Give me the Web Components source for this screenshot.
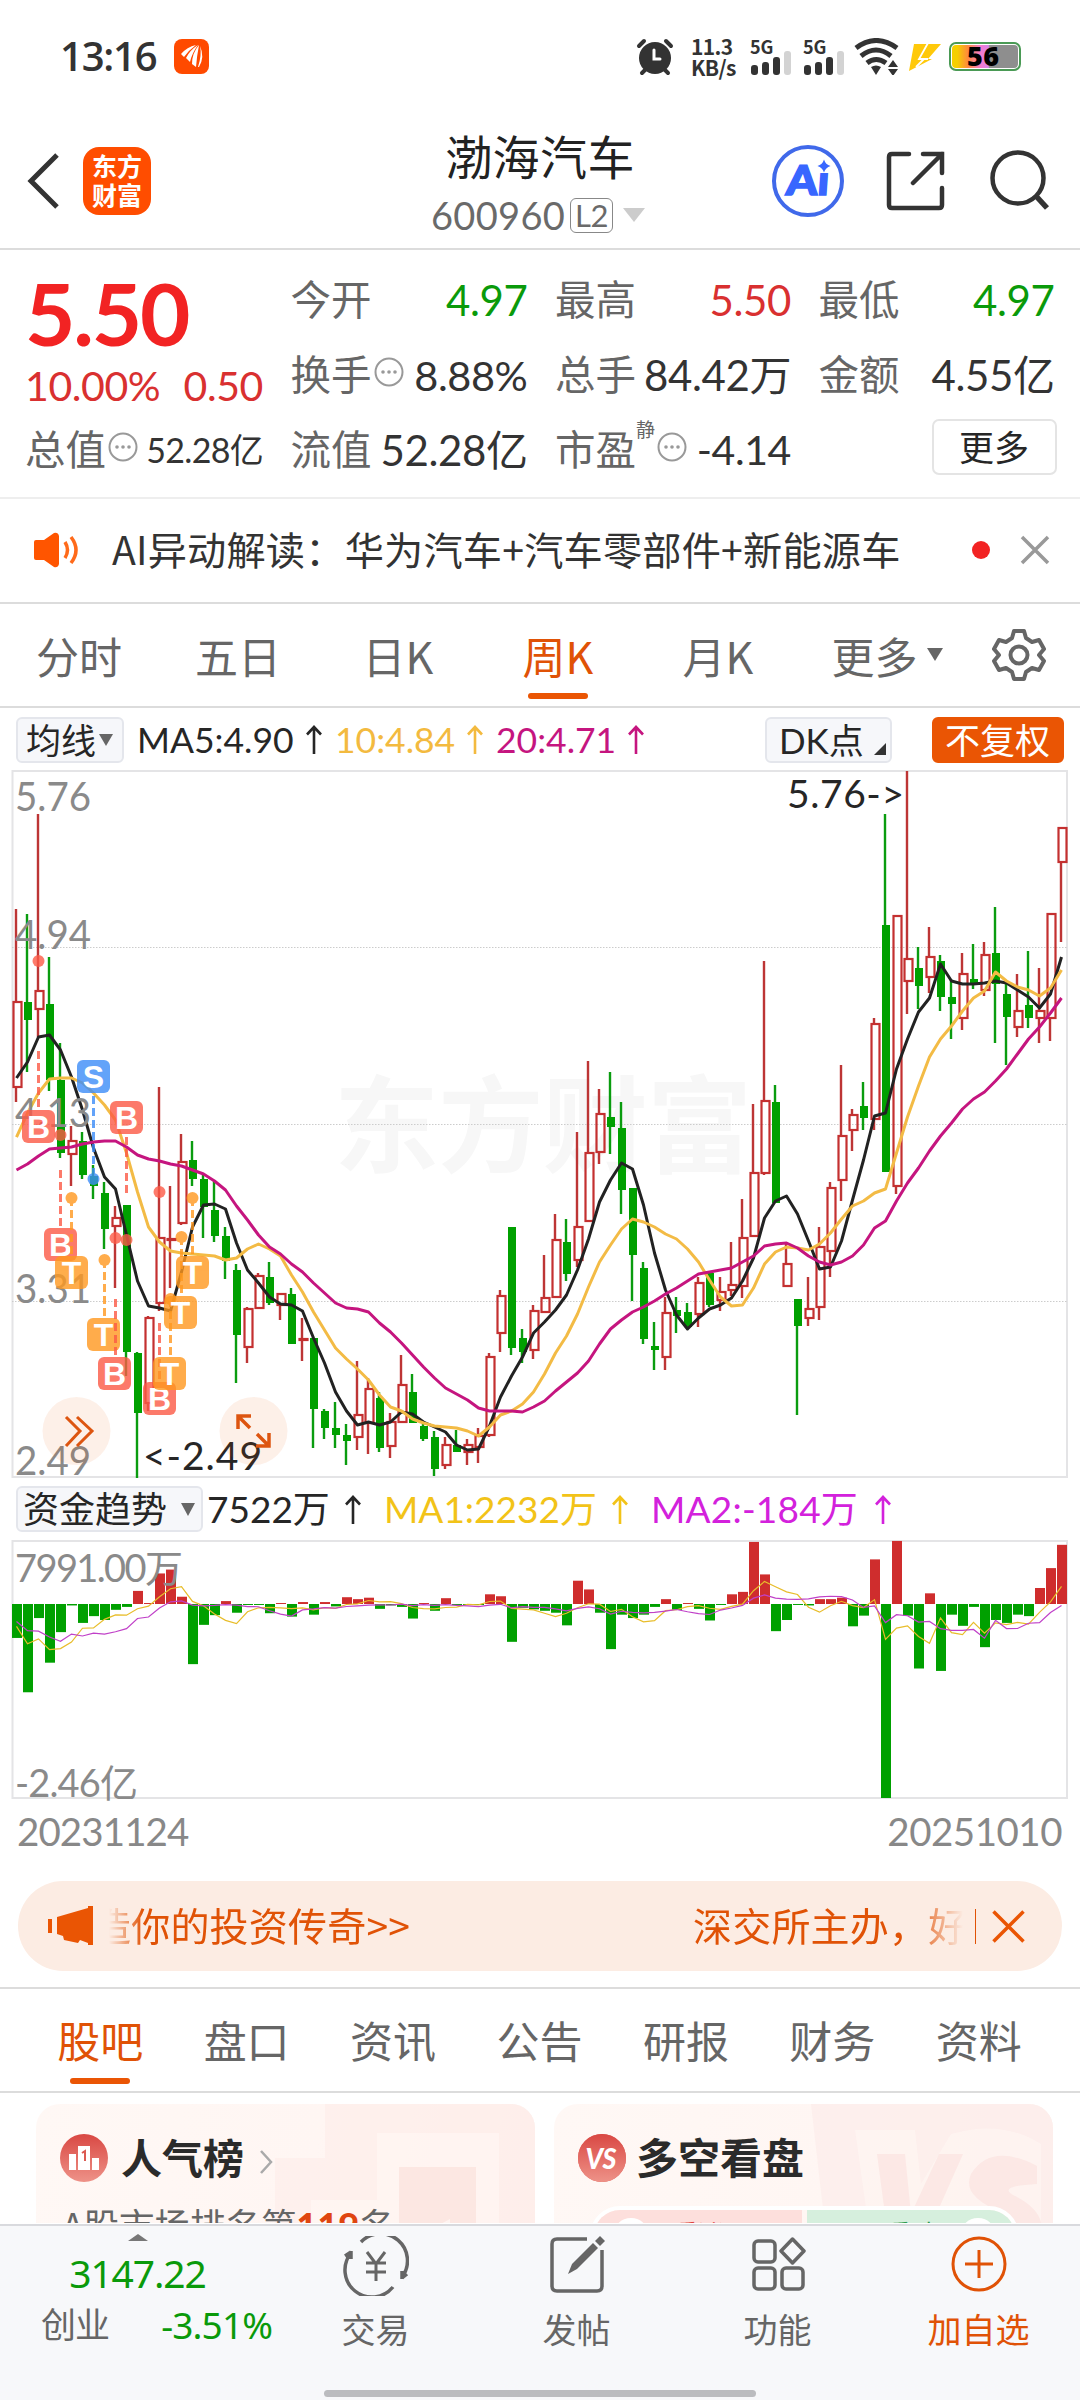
<!DOCTYPE html>
<html lang="zh-CN">
<head>
<meta charset="UTF-8">
<title>渤海汽车 600960</title>
<style>
  body {
    margin: 0;
    width: 1080px;
    height: 2400px;
    overflow: hidden;
    background: #fff;
    color: #262626;
    font-family: Lato, "Noto Sans CJK SC", sans-serif;
  }
</style>
</head>
<body>
<stock-app></stock-app>

<script>
const FONT_NUM = `font-family: Lato, "Noto Sans CJK SC", sans-serif;`;

function define(name, html, setup) {
  const template = document.createElement("template");
  template.innerHTML = html;
  customElements.define(name, class extends HTMLElement {
    constructor() {
      super();
      this.attachShadow({ mode: "open" });
      this.shadowRoot.appendChild(template.content.cloneNode(true));
    }
    connectedCallback() {
      if (setup) setup(this, this.shadowRoot);
    }
  });
}

/* ---------- status bar ---------- */

define("signal-bars", `
  <style>
    :host { display: flex; flex-direction: column; width: 42px; font: 700 18px/18px "Noto Sans CJK SC", sans-serif; letter-spacing: -0.2px; color: #333; }
    svg { display: block; margin: -5px 0 0 1px; }
  </style>
  <span>5G</span>
  <svg width="42" height="26" viewBox="0 0 42 26" fill="#333">
    <rect x="0" y="15" width="7" height="10" rx="3"/>
    <rect x="11" y="12" width="7" height="13" rx="3"/>
    <rect x="22" y="7" width="7" height="18" rx="3"/>
    <rect x="33" y="1" width="7" height="24" rx="3" fill="#d3d3d3"/>
  </svg>
`);

define("status-bar", `
  <style>
    :host { display: flex; align-items: center; height: 113px; box-sizing: border-box; padding-left: 60px; color: #333; }
    .time { font: 600 40px/44px "Open Sans", sans-serif; width: 114px; letter-spacing: -1.2px; margin-top: -2px; }
    .app { display: block; }
    .right { display: flex; align-items: center; margin-left: 427px; }
    .speed { font: 700 21px/21px "Noto Sans CJK SC", sans-serif; margin-left: 17px; width: 59px; letter-spacing: -0.6px; }
    signal-bars + signal-bars { margin-left: 11px; }
    svg { display: block; }
    .battery {
      width: 66px; height: 23px; margin-left: 7px; border: 2px solid #4a9a55; border-radius: 7px; position: relative;
      padding: 1px; display: flex; font: 700 27px/25px "Open Sans", sans-serif; color: #000; letter-spacing: 0.4px;
    }
    .battery i { display: block; flex: 1; border-radius: 4px; background: linear-gradient(90deg, #f5cf00 0 8%, #ff8a3c 24%, #f57bd0 44%, #d884e8 55%, #8e8e8e 57%); }
    .battery b { position: absolute; left: 16px; top: -1px; }
  </style>
  <span class="time">13:16</span>
  <svg class="app" width="35" height="35" viewBox="0 0 35 35">
    <rect width="35" height="35" rx="8" fill="#ff4a00"/>
    <g fill="#fff"><path d="M7 15Q13 8 22 6Q15 11 10 18Z"/><path d="M12 19Q16 11 24 6Q18 14 16 23Z"/><path d="M18 25Q18 14 25 6Q23 16 22 28Z"/><path d="M24 28Q28 16 26 7Q31 18 25 28Z"/></g>
  </svg>
  <div class="right">
    <svg width="38" height="38" viewBox="0 0 38 38" fill="none" stroke="#333" stroke-width="4" stroke-linecap="round">
      <circle cx="19" cy="20" r="16" fill="#333" stroke="none"/>
      <path d="M3 8L8 3M35 8L30 3M6 35L9 32M32 35L29 32"/>
      <path d="M18 12V21H24" stroke="#fff" stroke-width="3"/>
    </svg>
    <div class="speed">11.3<br>KB/s</div>
    <signal-bars></signal-bars>
    <signal-bars></signal-bars>
    <svg width="46" height="37" viewBox="0 0 46 37" style="margin-left:9px" fill="none" stroke="#333" stroke-width="5">
      <path d="M2 10Q22 -5 43 10M7 18Q22 6 37 18M13 25Q22 18 32 25"/>
      <path d="M17 29Q22 26 27 29L22 37Z" fill="#333" stroke="none"/>
      <path d="M34 29L39 22L44 29ZM34 31L39 38L44 31Z" fill="#333" stroke="none"/>
    </svg>
    <svg width="34" height="30" viewBox="0 0 34 30" style="margin-left:8px">
      <path d="M6 2H33L20 17H24L1 29Z" fill="#ffc90a"/><path d="M20 1L11 17H20M8 25L16 17" fill="none" stroke="#fff" stroke-width="1.800"/>
    </svg>
    <div class="battery"><i></i><b>56</b></div>
  </div>
`);

/* ---------- title bar ---------- */

define("title-bar", `
  <style>
    :host { display: grid; grid-template-columns: 330px 420px 330px; height: 135px; border-bottom: 2px solid #dcdcdc; }
    .left { display: flex; align-items: flex-start; padding: 34px 0 0 26px; }
    .logo {
      margin-left: 24px; width: 68px; height: 68px; box-sizing: border-box; padding-top: 4px; border-radius: 16px; background: #ff4d00; color: #fff;
      font: 700 25px/29px "Noto Sans CJK SC", sans-serif; text-align: center;
    }
    .mid { display: flex; flex-direction: column; align-items: center; }
    .name { font: 400 47px/56px "Noto Sans CJK SC", sans-serif; margin-top: 14px; height: 56px; color: #222; letter-spacing: 0.4px; }
    .code { display: flex; align-items: center; font-size: 38px; line-height: 40px; color: #6a6a6a; margin: 12px 4px 0 0; letter-spacing: 0.3px; }
    .code b { font-weight: 400; font-size: 31px; line-height: 33px; letter-spacing: -0.5px; border: 1.5px solid #888; border-radius: 6px; padding: 0 4px; margin-left: 5px; }
    .code i { border: 11px solid transparent; border-top: 14px solid #ccc; border-bottom: 0; margin-left: 10px; }
    .right { display: flex; align-items: flex-start; padding: 31px 0 0 21px; }
    svg { display: block; }
  </style>
  <div class="left">
    <svg width="33" height="66" viewBox="0 0 33 66" fill="none" stroke="#333" stroke-width="5"><path d="M31 8L5 34L31 60"/></svg>
    <div class="logo">东方<br>财富</div>
  </div>
  <div class="mid">
    <div class="name">渤海汽车</div>
    <div class="code">600960<b>L2</b><i></i></div>
  </div>
  <div class="right">
    <svg width="74" height="74" viewBox="0 0 74 74">
      <circle cx="37" cy="37" r="34" fill="#fff" stroke="#4069ea" stroke-width="4"/>
      <text x="17" y="51" style="font:900 41px Lato, sans-serif" fill="#3866ff" stroke="#3866ff" stroke-width="1.500" transform="skewX(-4) translate(1 0)" textLength="43" lengthAdjust="spacingAndGlyphs">Aı</text>
      <path d="M53 15.500Q54.500 20.500 59.500 22Q54.500 23.500 53 28.500Q51.500 23.500 46.500 22Q51.500 20.500 53 15.500Z" fill="#3866ff"/>
    </svg>
    <svg width="62" height="62" viewBox="0 0 62 62" style="margin:7px 0 0 40px" fill="none" stroke="#333" stroke-width="4.500">
      <path d="M24 3H7Q4 3 4 6V54Q4 57 7 57H54Q57 57 57 54V37M38 3H57V22M57 3L28 32" stroke-linecap="round"/>
    </svg>
    <svg width="64" height="64" viewBox="0 0 64 64" style="margin:6px 0 0 41px" fill="none" stroke="#333" stroke-width="4.500">
      <circle cx="30" cy="28" r="25.500"/><path d="M48 46L59 58" stroke-width="5.500"/>
    </svg>
  </div>
`);

/* ---------- quote panel ---------- */

define("hint-dot", `
  <style>:host { display: block; } svg { display: block; }</style>
  <svg width="30" height="30" viewBox="0 0 30 30"><circle cx="15" cy="15" r="13.500" fill="none" stroke="#999" stroke-width="2"/>
  <g fill="#999"><circle cx="9" cy="15" r="1.800"/><circle cx="15" cy="15" r="1.800"/><circle cx="21" cy="15" r="1.800"/></g></svg>
`);

define("quote-cell", `
  <style>
    :host { display: flex; align-items: center; height: 75px; line-height: 60px; color: #666; font-size: 40.500px; white-space: nowrap; }
    .value { margin-left: auto; color: var(--value-color, #333); font-size: var(--value-size, 42px); letter-spacing: var(--value-gap, -0.4px); }
    ::slotted(hint-dot) { margin: -6px 0 0 2px; }
    ::slotted(sup) { font-size: 19px; line-height: 20px; margin-top: -40px; }
  </style>
  <slot></slot><span class="value"><slot name="value"></slot></span>
`);

define("quote-panel", `
  <style>
    :host { display: grid; grid-template-columns: 238px 237px 236px 236px; column-gap: 27.500px; padding: 12px 26px 0 25px; height: 235px; border-bottom: 2px solid #eee; }
    .col { display: flex; flex-direction: column; }
    .price { height: 102px; font: 700 87px/102px Lato, sans-serif; color: #f22323; letter-spacing: -2.200px; }
    .chg { display: flex; justify-content: space-between; font-size: 41px; line-height: 44px; height: 48px; color: #d93030; letter-spacing: -0.400px; }
    .up { --value-color: #d93030; }
    .down { --value-color: #0a9a0a; }
    .more { display: flex; justify-content: flex-end; align-items: center; height: 75px; }
    .more span { width: 125px; height: 56px; box-sizing: border-box; border: 2px solid #e4e4e4; border-radius: 7px; text-align: center; font: 35px/49px "Noto Sans CJK SC", sans-serif; margin: -5px -2px 0 0; }
    .col > quote-cell { flex: none; }
  </style>
  <div class="col">
    <div class="price">5.50</div>
    <div class="chg"><span>10.00%</span><span>0.50</span></div>
    <quote-cell style="--value-size:34px;--value-gap:-0.7px">总值<hint-dot></hint-dot><span slot="value">52.28亿</span></quote-cell>
  </div>
  <div class="col">
    <quote-cell class="down">今开<span slot="value">4.97</span></quote-cell>
    <quote-cell style="--value-size:41.500px">换手<hint-dot></hint-dot><span slot="value">8.88%</span></quote-cell>
    <quote-cell>流值<span slot="value">52.28亿</span></quote-cell>
  </div>
  <div class="col">
    <quote-cell class="up">最高<span slot="value">5.50</span></quote-cell>
    <quote-cell>总手<span slot="value">84.42万</span></quote-cell>
    <quote-cell style="--value-size:41px">市盈<sup>静</sup><hint-dot></hint-dot><span slot="value">-4.14</span></quote-cell>
  </div>
  <div class="col">
    <quote-cell class="down">最低<span slot="value">4.97</span></quote-cell>
    <quote-cell>金额<span slot="value">4.55亿</span></quote-cell>
    <div class="more"><span>更多</span></div>
  </div>
`);

/* ---------- news strip ---------- */

define("news-strip", `
  <style>
    :host { display: flex; align-items: center; height: 103px; border-bottom: 2px solid #dcdcdc; padding: 0 30px 2px 34px; box-sizing: content-box; height: 101px; color: #333; }
    p { margin: -4px 0 0 32px; flex: 1; font: 39.200px/60px "Noto Sans CJK SC", sans-serif; letter-spacing: 0.2px; white-space: nowrap; }
    i { width: 18px; height: 18px; border-radius: 50%; background: #f22323; margin-right: 30px; }
    svg { display: block; }
  </style>
  <svg width="46" height="36" viewBox="0 0 46 36"><path d="M2 8H10L20 1Q24 0 25 4V32Q24 36 20 35L10 28H2Q0 28 0 26V10Q0 8 2 8Z" fill="#ff5500"/>
    <path d="M31 10Q36 18 31 26M37 5Q47 18 37 31" fill="none" stroke="#ff6a1a" stroke-width="3.500"/></svg>
  <p>AI异动解读：华为汽车+汽车零部件+新能源车</p>
  <i></i>
  <svg width="30" height="30" viewBox="0 0 30 30" stroke="#999" stroke-width="3.500"><path d="M2 2L28 28M28 2L2 28"/></svg>
`);

/* ---------- tabs ---------- */

define("tab-item", `
  <style>
    :host { display: flex; justify-content: center; align-items: center; position: relative; color: #666; font: 43px/60px "Noto Sans CJK SC", sans-serif; white-space: nowrap; }
    :host([active]) { color: #e05206; }
    :host([active])::after { content: ""; position: absolute; left: calc(50% - 30px); bottom: 7px; width: 60px; height: 6px; border-radius: 3px; background: #ea5504; }
  </style>
  <slot></slot>
`);

define("period-tabs", `
  <style>
    :host { display: flex; height: 102px; border-bottom: 2px solid #dcdcdc; }
    tab-item { width: 160px; }
    tab-item:first-of-type { width: 158px; }
    .more { width: 178px; }
    i { border: 8px solid transparent; border-top: 13px solid #666; border-bottom: 0; margin: -2px 0 0 9px; }
    .gear { display: flex; align-items: center; padding-left: 16px; }
  </style>
  <tab-item>分时</tab-item>
  <tab-item>五日</tab-item>
  <tab-item>日K</tab-item>
  <tab-item active>周K</tab-item>
  <tab-item>月K</tab-item>
  <tab-item class="more">更多<i></i></tab-item>
  <div class="gear">
    <svg width="54" height="54" viewBox="0 0 54 54" fill="none" stroke="#666" stroke-width="4" stroke-linejoin="round">
      <path d="M22 3H32L34 10L40 14L47 12L52 21L47 27L52 33L47 42L40 40L34 44L32 51H22L20 44L14 40L7 42L2 33L7 27L2 21L7 12L14 14L20 10Z"/>
      <circle cx="27" cy="27" r="8.500"/>
    </svg>
  </div>
`);

define("section-tabs", `
  <style>
    :host { display: flex; height: 102px; border-top: 2px solid #dcdcdc; border-bottom: 2px solid #dcdcdc; padding: 0 28px 0 27px; }
    tab-item { flex: 1; line-height: 56px; height: 102px; box-sizing: border-box; padding-bottom: 2px; }
  </style>
  <tab-item active>股吧</tab-item>
  <tab-item>盘口</tab-item>
  <tab-item>资讯</tab-item>
  <tab-item>公告</tab-item>
  <tab-item>研报</tab-item>
  <tab-item>财务</tab-item>
  <tab-item>资料</tab-item>
`);

/* ---------- chart legends ---------- */

define("up-arrow", `
  <style>:host { display: block; } svg { display: block; }</style>
  <svg width="16" height="29" viewBox="0 0 16 29" fill="none" stroke="currentColor" stroke-width="2.600"><path d="M8 29V2M1 9.500L8 2L15 9.500"/></svg>
`);

define("chip-button", `
  <style>
    :host { display: flex; align-items: center; box-sizing: border-box; height: 46px; border: 2px solid #e4e6ec; border-radius: 6px; background: #f6f7fa; color: #262626; font-size: 35px; line-height: 42px; white-space: nowrap; position: relative; }
    :host([solid]) { background: #ea5504; border-color: #ea5504; color: #fff; }
  </style>
  <slot></slot>
`);

define("ma-legend", `
  <style>
    :host { display: flex; align-items: center; height: 61px; padding: 0 0 1px 16px; font-size: 35.500px; line-height: 44px; white-space: nowrap; }
    .g { display: flex; align-items: center; }
    up-arrow { margin: 0 0 0 12px; }
    .tri { border: 7px solid transparent; border-top: 12px solid #666; border-bottom: 0; margin-left: 3px; }
    .corner { border: 6px solid transparent; border-right-color: #333; border-bottom-color: #333; margin: 19px 0 0 10px; }
  </style>
  <chip-button style="width:108px;padding-left:8px;">均线<i class="tri"></i></chip-button>
  <div class="g" style="width:198px;margin-left:13px"><span>MA5:4.90</span><up-arrow></up-arrow></div>
  <div class="g" style="width:161px;color:#f3ba3f"><span>10:4.84</span><up-arrow></up-arrow></div>
  <div class="g" style="width:269px;color:#c5157f"><span>20:4.71</span><up-arrow></up-arrow></div>
  <chip-button style="width:127px;padding-left:12px">DK点<i class="corner"></i></chip-button>
  <chip-button solid style="width:132px;margin-left:40px;padding-left:11px">不复权</chip-button>
`);

define("fund-legend", `
  <style>
    :host { display: flex; align-items: center; height: 64px; padding-left: 16px; font-size: 37px; line-height: 44px; white-space: nowrap; }
    .g { display: flex; align-items: center; }
    up-arrow { margin-left: 15px; }
    .tri { border: 7px solid transparent; border-top: 13px solid #666; border-bottom: 0; margin-left: 14px; }
  </style>
  <chip-button style="width:187px;padding-left:5px;font-size:36px">资金趋势<i class="tri"></i></chip-button>
  <div class="g" style="width:177px;margin-left:4px"><span>7522万</span><up-arrow></up-arrow></div>
  <div class="g" style="width:267px;color:#f2c318"><span>MA1:2232万</span><up-arrow></up-arrow></div>
  <div class="g" style="color:#d321dc;letter-spacing:0.2px"><span>MA2:-184万</span><up-arrow style="margin-left:17px"></up-arrow></div>
`);

/* ---------- weekly candles ---------- */

// one row per week: direction, high, body top, body bottom, low
const CANDLES = `
r 909 1002 1087 1102|g 914 1002 1020 1072|r 814 991 1009 1037|g 957 1004 1080 1091|g 1043 1080 1153 1158|r 1126 1141 1154 1186
g 1132 1141 1175 1179|g 1165 1176 1186 1199|g 1182 1193 1229 1249|r 1206 1218 1226 1288|g 1205 1205 1352 1376|g 1352 1353 1413 1478
r 1316 1318 1403 1411|r 1087 1238 1303 1311|r 1186 1239 1240 1288|r 1134 1162 1223 1225|g 1141 1160 1179 1186|g 1175 1179 1207 1238
g 1180 1210 1236 1242|g 1227 1236 1261 1279|g 1264 1270 1335 1383|r 1307 1309 1347 1363|r 1273 1276 1308 1309|g 1262 1277 1303 1305
r 1293 1294 1305 1320|g 1288 1294 1344 1344|r 1318 1339 1340 1361|g 1337 1338 1409 1448|g 1409 1411 1428 1439|g 1402 1428 1435 1448
g 1424 1435 1441 1465|r 1361 1415 1437 1450|r 1378 1389 1423 1454|g 1392 1398 1448 1452|r 1413 1422 1446 1458|r 1355 1385 1422 1422
g 1374 1392 1423 1423|g 1422 1426 1439 1441|g 1431 1437 1469 1476|r 1437 1445 1465 1469|g 1430 1445 1452 1452|r 1439 1445 1452 1465
r 1428 1436 1447 1463|r 1353 1357 1435 1437|r 1290 1296 1333 1352|g 1227 1227 1348 1355|g 1329 1338 1352 1363|r 1305 1311 1350 1359
r 1255 1298 1312 1313|r 1214 1240 1297 1298|g 1219 1242 1274 1281|r 1132 1227 1260 1267|r 1061 1153 1221 1221|r 1089 1114 1152 1164
g 1072 1117 1127 1154|g 1102 1128 1190 1214|g 1188 1188 1255 1301|g 1262 1268 1339 1344|g 1322 1346 1350 1370|r 1297 1313 1357 1370
g 1297 1310 1316 1333|g 1303 1312 1327 1328|r 1277 1283 1314 1327|g 1273 1273 1305 1307|r 1277 1292 1300 1311|r 1242 1285 1290 1296
r 1199 1238 1286 1298|r 1104 1173 1236 1236|r 961 1101 1173 1175|g 1085 1102 1203 1203|r 1244 1264 1286 1286|g 1299 1299 1326 1415
r 1277 1309 1318 1326|r 1227 1247 1307 1320|r 1182 1188 1251 1277|r 1065 1136 1180 1201|r 1109 1115 1130 1151|g 1082 1106 1118 1130
r 1018 1024 1119 1130|g 814 925 1172 1172|r 915 916 1186 1194|r 771 959 981 1014|g 947 968 986 1009|r 927 957 977 993
g 955 961 997 1011|g 979 997 1004 1039|r 953 974 1018 1030|g 944 979 983 989|r 942 955 990 996|g 907 953 984 1043
g 983 994 1017 1065|r 974 1011 1027 1037|g 951 1005 1018 1028|r 968 1011 1018 1043|r 913 914 1018 1041|r 827 828 862 942
`.trim().split(/[|\n]/).map((row) => {
  const [dir, ...v] = row.split(" ");
  return [dir, ...v.map(Number)];
});

const MA_LINES = [
  ["#222", "1078 1062 1037 1035 1050 1077 1110 1148 1177 1189 1235 1281 1306 1308 1311 1272 1227 1205 1204 1209 1243 1270 1283 1297 1304 1305 1311 1338 1363 1392 1411 1425 1422 1425 1422 1412 1414 1422 1427 1432 1445 1450 1449 1426 1397 1376 1357 1333 1322 1310 1295 1270 1239 1202 1180 1163 1169 1205 1253 1290 1315 1329 1318 1309 1305 1298 1281 1258 1218 1201 1196 1214 1241 1269 1267 1241 1200 1160 1116 1113 1069 1039 1012 998 964 981 984 984 983 981 983 990 997 1008 994 957"],
  ["#f3bb45", "1137 1113 1093 1079 1078 1078 1083 1093 1105 1120 1153 1192 1227 1242 1251 1253 1254 1255 1256 1260 1258 1249 1244 1249 1256 1275 1292 1312 1330 1348 1359 1369 1380 1395 1407 1411 1419 1423 1426 1427 1428 1431 1436 1427 1415 1411 1404 1392 1374 1353 1336 1314 1287 1262 1245 1229 1219 1222 1227 1234 1239 1249 1262 1280 1297 1306 1305 1288 1264 1252 1247 1248 1250 1244 1233 1219 1206 1201 1193 1189 1153 1117 1086 1057 1039 1026 1011 998 991 972 981 987 990 996 988 970"],
  ["#c5157f", "1170 1164 1156 1149 1148 1147 1144 1142 1141 1141 1147 1155 1159 1161 1164 1166 1170 1174 1181 1190 1206 1220 1235 1247 1254 1264 1272 1283 1293 1303 1308 1309 1312 1323 1332 1343 1355 1367 1378 1388 1394 1400 1408 1411 1411 1411 1412 1407 1401 1391 1382 1373 1361 1344 1329 1320 1312 1307 1301 1294 1288 1281 1274 1272 1270 1268 1262 1256 1246 1244 1243 1248 1256 1262 1265 1262 1256 1245 1228 1221 1201 1183 1168 1151 1136 1123 1109 1099 1092 1081 1069 1054 1039 1027 1013 998"],
];

// letter, badge left, badge top, stem x, stem from, stem to, dot y
const MARKS = [
  ["B", 22, 1110, 38, 1051, 1110, 961],
  ["S", 77, 1060, 93, 1096, 1179, 1179],
  ["B", 110, 1101, 126, 1137, 1193, 1240],
  ["B", 44, 1228, 60, 1170, 1228, 1135],
  ["T", 55, 1256, 71, 1198, 1256, 1198],
  ["T", 87, 1318, 104, 1260, 1318, 1260],
  ["B", 98, 1357, 115, 1299, 1357, 1238],
  ["B", 143, 1382, 159, 1323, 1382, 1192],
  ["T", 153, 1357, 170, 1299, 1357, 1299],
  ["T", 164, 1296, 181, 1237, 1296, 1237],
  ["T", 176, 1256, 192, 1198, 1256, 1198],
];
const MARK_COLORS = { B: "#fc5a46", S: "#3d8df8", T: "#ff981f" };

define("kline-chart", `
  <style>
    :host { display: block; height: 706px; }
    svg { display: block; overflow: visible; }
    text { ${FONT_NUM} }
  </style>
  <svg width="1080" height="706" viewBox="0 771 1080 706"></svg>
`, (host, root) => {
  const wickX = (i) => 16 + 11 * i;
  let out = `<text x="334" y="1164" font-weight="700" font-size="105" fill="#f7f7f7" textLength="418">东方财富</text>`;
  out += `<rect x="12.500" y="771" width="1054.500" height="706" fill="none" stroke="#e4e4e6" stroke-width="2"/>`;
  for (const y of [947.5, 1124.5, 1301.5]) {
    out += `<path d="M12 ${y}H1067" stroke="#ccc" stroke-dasharray="1.500 1.500"/>`;
  }
  CANDLES.forEach(([dir, high, top, bottom, low], i) => {
    const x = wickX(i);
    if (dir === "g") {
      out += `<path d="M${x} ${high}V${low}" stroke="#0a9c0f" stroke-width="2.400"/>`;
      out += `<rect x="${x - 3}" y="${top}" width="8" height="${bottom - top}" fill="#00a000"/>`;
    } else {
      out += `<path d="M${x} ${high}V${top}M${x} ${bottom}V${low}" stroke="#bd3535" stroke-width="2.400"/>`;
      out += `<rect x="${x - 2.5}" y="${top}" width="8" height="${Math.max(bottom - top, 0.5)}" fill="none" stroke="#c43030" stroke-width="2.200"/>`;
    }
  });
  MA_LINES.forEach(([color, ys]) => {
    const pts = ys.split(" ").map((y, i) => `${wickX(i) + 0.5},${y}`).join(" ");
    out += `<polyline points="${pts}" fill="none" stroke="${color}" stroke-width="3" stroke-linejoin="round"/>`;
  });
  [["5.76", 811], ["4.94", 949], ["4.13", 1127], ["3.31", 1303], ["2.49", 1475]].forEach(([t, y]) => {
    out += `<text x="15" y="${y}" font-size="40" fill="#8a8a8a" textLength="76" lengthAdjust="spacingAndGlyphs">${t}</text>`;
  });
  out += `<text x="787" y="808" font-size="39" fill="#262626" textLength="117">5.76-&gt;</text>`;
  out += `<text x="143" y="1470" font-size="39" fill="#262626" textLength="119">&lt;-2.49</text>`;
  MARKS.forEach(([letter, x, y, sx, from, to, dot]) => {
    const c = MARK_COLORS[letter];
    out += `<g opacity="0.8"><path d="M${sx + 0.5} ${from}V${to}" stroke="${c}" stroke-width="3" stroke-dasharray="8 4"/>
      <circle cx="${sx + 0.5}" cy="${dot}" r="6" fill="${c}"/>
      <rect x="${x}" y="${y}" width="33" height="33" rx="6" fill="${c}"/></g>
      <text x="${x + 16.5}" y="${y + 28}" font-size="32" text-anchor="middle" fill="#fff" style="font-family:'Liberation Sans',sans-serif;font-weight:700">${letter}</text>`;
  });
  out += `<circle cx="76.500" cy="1431" r="34" fill="#ea5504" opacity="0.09"/><circle cx="253.500" cy="1431" r="34" fill="#ea5504" opacity="0.09"/>
    <g fill="none" stroke="#dd5510" stroke-width="3"><path d="M66 1417L80 1431L66 1446M77 1417L92 1431L77 1446"/>
    <path d="M238 1429V1416H251M239 1417L250 1428M269 1433V1446H256M268 1445L257 1434" stroke-width="3.500"/></g>`;
  root.querySelector("svg").innerHTML = out;
});

/* ---------- fund flow ---------- */

const FLOW = [
  -35, -91, -14.5, -60.5, -29, -1.5, -19.5, -12.5, -16.5, -6, -3, 13.5, 1, 31.5, 35.5, 7.5, -62, -21.5, -11.5, 3, -9, -1, -1, -9.5,
  1, -13, 2, -11, 2, -2.5, 7, 5, 6.5, -5, -1.5, -3, -15, 1, -7, 6, -1, -1, -1, 10, 8, -39, -4, -5.5,
  -7, -9, -22, 24, 15, -9, -46.5, -11, -14.5, -11, -3, 5, -6, 1, -5, -17, -1, 10, 12.5, 64, 30.5, -28, -16.5, -1,
  -1.5, 5, 5, 6.5, -23, -12, 46, -200, 65, -12, -66.5, 11, -69, -11, -22.5, -3, -44.5, -16.5, -19.5, -11, -12.5, 16.5, 37, 61,
];

define("fund-chart", `
  <style>
    :host { display: block; }
    svg { display: block; overflow: visible; }
    text { ${FONT_NUM} font-size: 38px; fill: #8a8a8a; }
    .dates { display: flex; justify-content: space-between; height: 83px; padding: 10px 18px 0 17px; box-sizing: border-box; color: #888; font-size: 38.500px; line-height: 46px; letter-spacing: -0.900px; }
    .dates span + span { letter-spacing: -0.500px; }
  </style>
  <svg width="1080" height="257" viewBox="0 0 1080 257"></svg>
  <div class="dates"><span>20231124</span><span>20251010</span></div>
`, (host, root) => {
  const zero = 63;
  const scale = 0.97;
  const average = (n, seed) => FLOW.map((_, i) => {
    if (i < seed.length) return seed[i];
    return FLOW.slice(i - n + 1, i + 1).reduce((a, b) => a + b) / n;
  });
  const line = (values, color) => `<polyline fill="none" stroke="${color}" stroke-width="1.200" points="${values.map((v, i) => `${16.5 + 11 * i},${zero - v * scale}`).join(" ")}"/>`;
  let out = `<rect x="12.500" y="0" width="1054.500" height="257" fill="none" stroke="#e4e4e6" stroke-width="2"/>`;
  FLOW.forEach((v, i) => {
    out += `<rect x="${12 + 11 * i}" y="${v > 0 ? zero - v * scale : zero}" width="10" height="${Math.abs(v) * scale}" fill="${v > 0 ? "#cf2d2d" : "#00a000"}"/>`;
  });
  out += line(average(5, [-23, -41, -36, -47]), "#e8bd2a");
  out += line(average(10, [-18, -27.5, -28, -34, -38.5, -31, -33, -30, -31]), "#c040c8");
  out += `<text x="15" y="41" textLength="168">7991.00万</text><text x="15" y="256" textLength="123">-2.46亿</text>`;
  root.querySelector("svg").innerHTML = out;
});

/* ---------- promo banner ---------- */

define("promo-banner", `
  <style>
    :host { display: flex; align-items: center; height: 90px; margin: 0 18px 16px; border-radius: 45px; background: #fcece3; color: #e05206; padding: 0 37px 0 30px; }
    .track { flex: 1; display: flex; overflow: hidden; white-space: nowrap; margin: -5px 0 0 15px; font: 39px/60px "Noto Sans CJK SC", sans-serif; letter-spacing: 0.200px;
      -webkit-mask-image: linear-gradient(90deg, transparent 0, #000 4%, #000 94%, transparent 100%); mask-image: linear-gradient(90deg, transparent 0, #000 4%, #000 94%, transparent 100%); }
    .track span { margin-left: -17px; width: 601px; flex: none; }
    .track b { font-weight: 400; }
    .bar { width: 1.500px; height: 35px; background: #e05206; margin: 0 16px 0 12px; }
    svg { display: block; }
  </style>
  <svg width="46" height="40" viewBox="0 0 46 40" fill="#ea5504"><path d="M0 13H4V27H0ZM9 11L40 2V0H45V39H40V37L32 34L30 37L16 34L15 30L9 28Z"/></svg>
  <div class="track"><span>造你的投资传奇&gt;&gt;</span><b>深交所主办，好</b></div>
  <div class="bar"></div>
  <svg width="33" height="33" viewBox="0 0 33 33" stroke="#ea5504" stroke-width="3.500"><path d="M1.500 1.500L31.500 31.500M31.500 1.500L1.500 31.500"/></svg>
`);

/* ---------- cards ---------- */

define("info-card", `
  <style>
    :host { display: block; position: relative; width: 499px; height: 140px; border-radius: 24px 24px 0 0; overflow: hidden; background: linear-gradient(100deg, #fff8f5, #fff6f3 55%, #fdeeec); }
    header { position: relative; display: flex; align-items: center; height: 58px; padding: 25px 0 0 24px; font: 700 41px/58px "Noto Sans CJK SC", sans-serif; color: #2b2b2b; }
    ::slotted([slot="icon"]) { display: block; margin-right: 14px; }
    ::slotted([slot="title"]) { margin-top: -5px; }
    ::slotted([slot="bg"]) { position: absolute; right: 0; top: 0; }
  </style>
  <slot name="bg"></slot>
  <header><slot name="icon"></slot><slot name="title"></slot></header>
  <slot></slot>
`);

define("card-row", `
  <style>
    :host { display: flex; gap: 19px; height: 119px; padding: 11px 0 0 36px; overflow: hidden; }
    .rank { position: relative; padding: 12px 0 0 26px; font: 35.500px/50px "Noto Sans CJK SC", sans-serif; color: #666; white-space: nowrap; }
    .rank b { color: #e0450f; font-family: Lato, sans-serif; font-weight: 900; font-size: 36px; }
    .vote { position: relative; display: flex; gap: 5px; margin: 19px 34px 0 36px; height: 54px; border: 4px solid #fff; border-radius: 30px; overflow: hidden; font: 26px/36px "Noto Sans CJK SC", sans-serif; }
    .vote span { flex: 1; padding-top: 5px; text-align: center; }
    .vote i { position: absolute; top: 8px; width: 36px; height: 36px; border-radius: 50%; background: #fff; }
  </style>
  <info-card>
    <svg slot="bg" width="260" height="140" viewBox="0 0 260 140">
      <path d="M50 0H260V140H0V54H50Z" fill="#fdeeea" opacity="0.700"/><path d="M102 29H224V140H36V96H102Z" fill="#fff6f4" opacity="0.700"/><path d="M124 63H201V140H74V119H124Z" fill="#fbe3df" opacity="0.800"/><path d="M147 130L175 115V140H147Z" fill="#fff4f1"/>
    </svg>
    <svg slot="icon" width="48" height="48" viewBox="0 0 48 48"><defs><linearGradient id="g" x2="0" y2="1"><stop stop-color="#d94843"/><stop offset="1" stop-color="#ee9288"/></linearGradient></defs>
      <circle cx="24" cy="24" r="24" fill="url(#g)"/><path d="M9 20H16V36H9ZM18 12H30V36H18ZM32 24H39V36H32Z" fill="#fff"/><path d="M22 19L25 17V27" stroke="#dc5a52" stroke-width="2" fill="none"/></svg>
    <span slot="title" style="margin-left:-1px">人气榜<svg width="14" height="24" viewBox="0 0 14 24" style="margin-left:15px" fill="none" stroke="#aaa" stroke-width="2.500"><path d="M2 1L12 12L2 23"/></svg></span>
    <div class="rank">A股市场排名第<b>119</b>名</div>
  </info-card>
  <info-card>
    <svg slot="bg" width="242" height="140" viewBox="0 0 242 140">
      <path d="M0 0H242V140H16Z" fill="#fdeeeb" opacity="0.800"/>
      <path d="M44 26H104L110 80L140 30Q190 15 230 40V140H60Z" fill="#fff6f4" opacity="0.600"/>
      <path d="M66 50H94L100 110L128 50H152L112 140H78Z" fill="#fbe3df" opacity="0.700"/><path d="M226 62Q180 38 160 70Q150 92 190 108Q206 118 190 140H228Q240 110 204 92Q184 82 226 80Z" fill="#fbe3df" opacity="0.700"/>
    </svg>
    <svg slot="icon" width="48" height="48" viewBox="0 0 48 48"><circle cx="24" cy="24" r="24" fill="#dd5751"/><circle cx="24" cy="24" r="24" fill="url(#g)"/><text x="23" y="35" text-anchor="middle" fill="#fff" style="font:italic 900 29px Lato, sans-serif" textLength="31" lengthAdjust="spacingAndGlyphs">VS</text></svg>
    <span slot="title" style="margin-left:-4px;font-size:42px">多空看盘</span>
    <div class="vote"><span style="background:#fddfdc;color:#e0453c">看涨</span><span style="background:#d6efdd;color:#2e9c4e">看跌</span><i style="left:19px"></i><i style="right:19px"></i></div>
  </info-card>
`);

/* ---------- bottom bar ---------- */

define("nav-button", `
  <style>
    :host { display: flex; flex-direction: column; align-items: center; width: 201px; color: #666; font: 34px/48px "Noto Sans CJK SC", sans-serif; }
    :host([accent]) { color: #e05206; }
    .icon { height: 56px; margin: 10px 0 13px; color: inherit; }
  </style>
  <div class="icon"><slot name="icon"></slot></div><slot></slot>
`);

define("bottom-bar", `
  <style>
    :host { display: flex; position: relative; box-sizing: border-box; height: 176px; background: #f7f8fa; border-top: 2px solid #d9dade; }
    .index { width: 275px; display: flex; flex-direction: column; align-items: center; font-family: "Noto Sans", "Noto Sans CJK SC", sans-serif; color: #0a9a0a; }
    .index i { border: 10px solid transparent; border-bottom: 7px solid #777; border-top: 0; margin-top: 8px; }
    .point { font-size: 39px; line-height: 50px; margin-top: 7px; letter-spacing: -1.100px; }
    .row { display: flex; justify-content: space-between; width: 231px; margin: 4px 0 0 38px; font-size: 37px; line-height: 46px; letter-spacing: -0.900px; }
    .row span { color: #666; font-size: 35px; }
    .home { position: absolute; left: 324px; bottom: 3px; width: 432px; height: 7px; border-radius: 4px; background: #bbbcbf; }
    svg { display: block; }
  </style>
  <div class="index"><i></i><div class="point">3147.22</div><div class="row"><span>创业</span>-3.51%</div></div>
  <nav-button>
    <svg slot="icon" width="66" height="60" viewBox="0 0 66 60" fill="none" stroke="#666" stroke-width="3.500">
      <path d="M18 6A27 27 0 0 1 59 41M59 43V35M59 42L64 38M50 51A27 27 0 0 1 8 17M8 15V23M8 16L2 20" />
      <path d="M24 16L33 28L42 16M33 28V45M23 27H43M23 36H43" stroke-width="3"/>
    </svg>交易</nav-button>
  <nav-button>
    <svg slot="icon" width="56" height="58" viewBox="0 0 56 58" fill="none" stroke="#666" stroke-width="3.500">
      <path d="M38 3H8Q3 3 3 8V50Q3 55 8 55H48Q53 55 53 50V14"/><path d="M19 38L23 28L44 7L49 12L28 33Z" fill="#666" stroke="none"/><path d="M46 5L51 0L56 5L51 10Z" fill="#666" stroke="none"/>
    </svg>发帖</nav-button>
  <nav-button>
    <svg slot="icon" width="56" height="58" viewBox="0 0 56 58" fill="none" stroke="#666" stroke-width="3.500">
      <rect x="4" y="5" width="21" height="21" rx="4"/><rect x="4" y="32" width="21" height="21" rx="4"/><rect x="32" y="32" width="21" height="21" rx="4"/><path d="M42.500 3L54 15L42.500 27L31 15Z" stroke-linejoin="round"/>
    </svg>功能</nav-button>
  <nav-button accent>
    <svg slot="icon" width="56" height="56" viewBox="0 0 56 56" fill="none" stroke="#e05206" stroke-width="3"><circle cx="28" cy="28" r="26"/><path d="M14 28H42M28 14V42"/></svg>加自选</nav-button>
  <div class="home"></div>
`);

define("stock-app", `
  <style>
    :host { display: flex; flex-direction: column; width: 1080px; height: 2400px; overflow: hidden; background: #fff; }
    :host > * { flex: none; }
    bottom-bar { margin-top: auto; z-index: 1; }
    ma-legend { margin-top: 1px; }
  </style>
  <status-bar></status-bar>
  <title-bar></title-bar>
  <quote-panel></quote-panel>
  <news-strip></news-strip>
  <period-tabs></period-tabs>
  <ma-legend></ma-legend>
  <kline-chart></kline-chart>
  <fund-legend></fund-legend>
  <fund-chart></fund-chart>
  <promo-banner></promo-banner>
  <section-tabs></section-tabs>
  <card-row></card-row>
  <bottom-bar></bottom-bar>
`);
</script>
</body>
</html>
